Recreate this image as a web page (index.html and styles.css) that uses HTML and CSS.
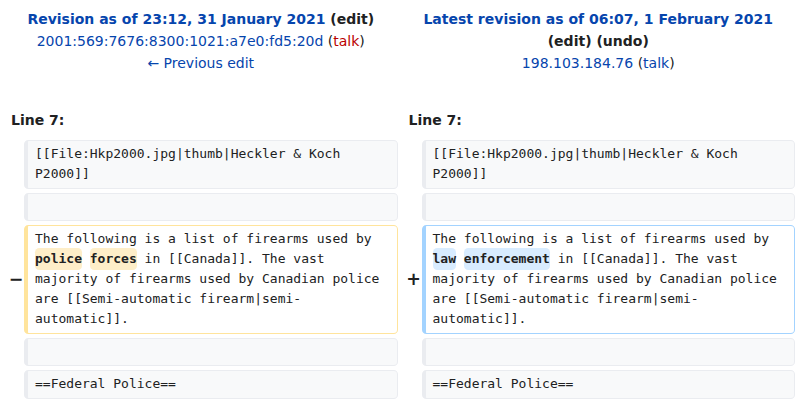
FILE: index.html
```html
<!DOCTYPE html>
<html lang="en">
<head>
<meta charset="utf-8">
<title>Diff</title>
<link rel="stylesheet" href="styles.css">
</head>
<body>
<div class="diff">
  <div class="title">
    <div class="t1"><a class="link">Revision as of 23:12, 31 January 2021</a> <span class="dark">(edit)</span></div>
    <div><a class="link">2001:569:7676:8300:1021:a7e0:fd5:20d</a> (<a class="new">talk</a>)</div>
    <div><a class="link">← Previous edit</a></div>
  </div>
  <div class="title">
    <div class="t1"><a class="link">Latest revision as of 06:07, 1 February 2021</a> <span class="dark">(edit)</span> <span class="dark">(undo)</span></div>
    <div><a class="link">198.103.184.76</a> (<a class="link">talk</a>)</div>
  </div>

  <div class="lineno">Line 7:</div>
  <div class="lineno">Line 7:</div>

  <div class="marker"></div>
  <div class="line ctx">[[File:Hkp2000.jpg|thumb|Heckler &amp; Koch P2000]]</div>
  <div class="marker"></div>
  <div class="line ctx">[[File:Hkp2000.jpg|thumb|Heckler &amp; Koch P2000]]</div>

  <div class="marker"></div>
  <div class="line ctx empty"></div>
  <div class="marker"></div>
  <div class="line ctx empty"></div>

  <div class="marker">−</div>
  <div class="line del">The following is a list of firearms used by <del class="chg">police</del> <del class="chg">forces</del> in [[Canada]]. The vast majority of firearms used by Canadian police are [[Semi-automatic firearm|semi-automatic]].</div>
  <div class="marker">+</div>
  <div class="line add">The following is a list of firearms used by <ins class="chg">law</ins> <ins class="chg">enforcement</ins> in [[Canada]]. The vast majority of firearms used by Canadian police are [[Semi-automatic firearm|semi-automatic]].</div>

  <div class="marker"></div>
  <div class="line ctx empty"></div>
  <div class="marker"></div>
  <div class="line ctx empty"></div>

  <div class="marker"></div>
  <div class="line ctx">==Federal Police==</div>
  <div class="marker"></div>
  <div class="line ctx">==Federal Police==</div>
</div>
</body>
</html>
```
FILE: styles.css
```css
html, body {
  margin: 0;
  background: #ffffff;
}
body {
  font-family: "DejaVu Sans", sans-serif;
  font-size: 14px;
  line-height: 1.6;
  color: #202122;
}
.diff {
  display: grid;
  grid-template-columns: 16px 1fr 16px 1fr;
  gap: 4px;
  padding: 4px;
}
.title {
  grid-column: span 2;
  text-align: center;
  padding: 3.6px 7px 24.9px;
}
.t1 {
  font-weight: bold;
}
.link {
  color: #0645ad;
  text-decoration: none;
}
.new {
  color: #ba0000;
  text-decoration: none;
}
.dark {
  color: #202122;
}
.lineno {
  grid-column: span 2;
  font-weight: bold;
  padding: 5px 7px 4.6px;
}
.marker {
  display: flex;
  align-items: center;
  justify-content: flex-end;
  font-weight: bold;
  font-size: 17.5px;
  line-height: 1.2;
  margin-right: -3.5px;
}
.line {
  font-family: "DejaVu Sans Mono", monospace;
  font-size: 13px;
  line-height: 20px;
  white-space: pre-wrap;
  overflow-wrap: break-word;
  border: 1px solid;
  border-left-width: 4px;
  border-radius: 4.3px;
  padding: 3.65px 7px;
  min-width: 0;
}
.ctx {
  background: #f8f9fa;
  border-color: #eaecf0;
}
.empty {
  height: 18.5px;
}
.del {
  background: #ffffff;
  border-color: #ffe49c;
}
.add {
  background: #ffffff;
  border-color: #a3d3ff;
}
.chg {
  font-weight: bold;
  text-decoration: none;
  border-radius: 4.3px;
  padding: 3.25px 0;
}
del.chg {
  background: #feeec8;
}
ins.chg {
  background: #d8ecff;
}
```
